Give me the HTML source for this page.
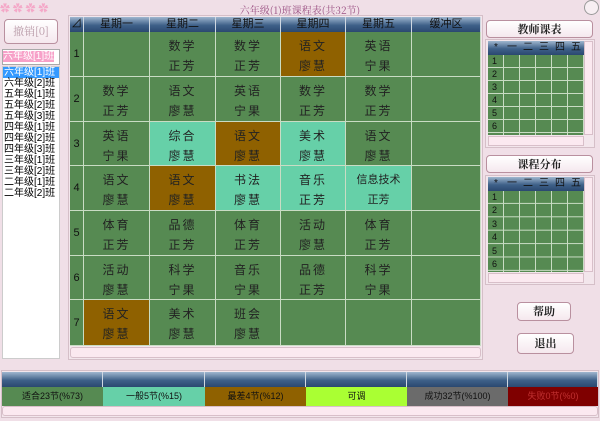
<!DOCTYPE html><html><head><meta charset="utf-8"><style>
*{margin:0;padding:0;box-sizing:border-box}
body{width:600px;height:421px;background:#f0dfe7;position:relative;overflow:hidden;font-family:"Liberation Sans","Noto Sans CJK SC","WenQuanYi Zen Hei",sans-serif}
.a{position:absolute}
.title{left:0;width:600px;top:2px;text-align:center;font-size:10px;color:#9a4f82;font-family:"Noto Serif CJK SC",serif}
.btn{background:linear-gradient(#fff,#f5e8ee);border:1px solid #b9909f;border-radius:4px;text-align:center;font-weight:bold;font-size:11px;color:#222;font-family:"Noto Serif CJK SC",serif}
.hd{background:linear-gradient(#9fb6cf,#3f6189 55%,#2a4870);color:#111;font-size:11px;line-height:15px;text-align:center;border-right:1px solid #cfd8e2}
.c{border-right:1px solid #c9dcc4;border-bottom:1px solid #c9dcc4;font-size:12px;color:#222;text-align:center;line-height:20px;padding-top:4px;letter-spacing:2px}
.g{background:#568a52}.t{background:#66d0a8}.b{background:#8f6100}
.n{background:#568a52;border-right:1px solid #c9dcc4;border-bottom:1px solid #c9dcc4;font-size:11px;color:#111;text-align:center}
.list div{height:11px;line-height:11px;font-size:10px;color:#000;padding-left:1px;white-space:nowrap}
.sb{background:#fbe9f0;border:1px solid #d8bfc9}
.lg{font-size:9px;text-align:center;line-height:19px;color:#111}
.lh{top:372px;height:15px;background:linear-gradient(#9fb6cf,#3f6189 55%,#2a4870);border-right:1px solid #d0d8e2}
.mh{display:flex;background:linear-gradient(#9fb6cf,#3f6189 55%,#2a4870);font-size:10px;color:#111;line-height:14px}
.mh span{width:16px;text-align:center}
</style></head><body>
<div class="a title">六年级(1)班课程表(共32节)</div>
<div class="a" style="left:584px;top:0;width:15px;height:15px;border:1px solid #999;border-radius:50%;background:#f7eef2"></div>
<div class="a" style="left:0;top:0;width:70px;height:16px;color:#f4a8c8;font-size:10px">✿ ✿ ✿ ✿</div>
<div class="a btn" style="left:4px;top:19px;width:54px;height:25px;line-height:23px;color:#b99aa8;font-weight:normal">撤销[0]</div>
<div class="a" style="left:2px;top:49px;width:58px;height:16px;background:#fff;border:1px solid #a9a9a9;font-size:10px;line-height:14px"><span style="background:#f7a0c8;color:#fff">六年级[1]班</span></div>
<div class="a list" style="left:2px;top:66px;width:58px;height:293px;background:#fff;border:1px solid #ccc">
<div style="background:#3399ff;color:#fff">六年级[1]班</div><div>六年级[2]班</div><div>五年级[1]班</div><div>五年级[2]班</div><div>五年级[3]班</div><div>四年级[1]班</div><div>四年级[2]班</div><div>四年级[3]班</div><div>三年级[1]班</div><div>三年级[2]班</div><div>二年级[1]班</div><div>二年级[2]班</div></div>
<div class="a" style="left:68px;top:15px;width:415px;height:345px;border:1px solid #d5bfc8;background:#f3e6ec"></div>
<div class="a hd" style="left:70px;top:17px;width:14px;height:15px">⊿</div>
<div class="a hd" style="left:84px;top:17px;width:66px;height:15px">星期一</div>
<div class="a hd" style="left:150px;top:17px;width:66px;height:15px">星期二</div>
<div class="a hd" style="left:216px;top:17px;width:65px;height:15px">星期三</div>
<div class="a hd" style="left:281px;top:17px;width:65px;height:15px">星期四</div>
<div class="a hd" style="left:346px;top:17px;width:66px;height:15px">星期五</div>
<div class="a hd" style="left:412px;top:17px;width:69px;height:15px">缓冲区</div>
<div class="a n" style="left:70px;top:32px;width:14px;height:45px;line-height:45px">1</div>
<div class="a n" style="left:70px;top:77px;width:14px;height:45px;line-height:45px">2</div>
<div class="a n" style="left:70px;top:122px;width:14px;height:44px;line-height:44px">3</div>
<div class="a n" style="left:70px;top:166px;width:14px;height:45px;line-height:45px">4</div>
<div class="a n" style="left:70px;top:211px;width:14px;height:45px;line-height:45px">5</div>
<div class="a n" style="left:70px;top:256px;width:14px;height:44px;line-height:44px">6</div>
<div class="a n" style="left:70px;top:300px;width:14px;height:46px;line-height:46px">7</div>
<div class="a c g" style="left:84px;top:32px;width:66px;height:45px"></div>
<div class="a c g" style="left:150px;top:32px;width:66px;height:45px">数学<br>正芳</div>
<div class="a c g" style="left:216px;top:32px;width:65px;height:45px">数学<br>正芳</div>
<div class="a c b" style="left:281px;top:32px;width:65px;height:45px">语文<br>廖慧</div>
<div class="a c g" style="left:346px;top:32px;width:66px;height:45px">英语<br>宁果</div>
<div class="a c g" style="left:412px;top:32px;width:69px;height:45px"></div>
<div class="a c g" style="left:84px;top:77px;width:66px;height:45px">数学<br>正芳</div>
<div class="a c g" style="left:150px;top:77px;width:66px;height:45px">语文<br>廖慧</div>
<div class="a c g" style="left:216px;top:77px;width:65px;height:45px">英语<br>宁果</div>
<div class="a c g" style="left:281px;top:77px;width:65px;height:45px">数学<br>正芳</div>
<div class="a c g" style="left:346px;top:77px;width:66px;height:45px">数学<br>正芳</div>
<div class="a c g" style="left:412px;top:77px;width:69px;height:45px"></div>
<div class="a c g" style="left:84px;top:122px;width:66px;height:44px">英语<br>宁果</div>
<div class="a c t" style="left:150px;top:122px;width:66px;height:44px">综合<br>廖慧</div>
<div class="a c b" style="left:216px;top:122px;width:65px;height:44px">语文<br>廖慧</div>
<div class="a c t" style="left:281px;top:122px;width:65px;height:44px">美术<br>廖慧</div>
<div class="a c g" style="left:346px;top:122px;width:66px;height:44px">语文<br>廖慧</div>
<div class="a c g" style="left:412px;top:122px;width:69px;height:44px"></div>
<div class="a c g" style="left:84px;top:166px;width:66px;height:45px">语文<br>廖慧</div>
<div class="a c b" style="left:150px;top:166px;width:66px;height:45px">语文<br>廖慧</div>
<div class="a c t" style="left:216px;top:166px;width:65px;height:45px">书法<br>廖慧</div>
<div class="a c t" style="left:281px;top:166px;width:65px;height:45px">音乐<br>正芳</div>
<div class="a c t" style="left:346px;top:166px;width:66px;height:45px;letter-spacing:0;font-size:11px">信息技术<br>正芳</div>
<div class="a c g" style="left:412px;top:166px;width:69px;height:45px"></div>
<div class="a c g" style="left:84px;top:211px;width:66px;height:45px">体育<br>正芳</div>
<div class="a c g" style="left:150px;top:211px;width:66px;height:45px">品德<br>正芳</div>
<div class="a c g" style="left:216px;top:211px;width:65px;height:45px">体育<br>正芳</div>
<div class="a c g" style="left:281px;top:211px;width:65px;height:45px">活动<br>廖慧</div>
<div class="a c g" style="left:346px;top:211px;width:66px;height:45px">体育<br>正芳</div>
<div class="a c g" style="left:412px;top:211px;width:69px;height:45px"></div>
<div class="a c g" style="left:84px;top:256px;width:66px;height:44px">活动<br>廖慧</div>
<div class="a c g" style="left:150px;top:256px;width:66px;height:44px">科学<br>宁果</div>
<div class="a c g" style="left:216px;top:256px;width:65px;height:44px">音乐<br>宁果</div>
<div class="a c g" style="left:281px;top:256px;width:65px;height:44px">品德<br>正芳</div>
<div class="a c g" style="left:346px;top:256px;width:66px;height:44px">科学<br>宁果</div>
<div class="a c g" style="left:412px;top:256px;width:69px;height:44px"></div>
<div class="a c b" style="left:84px;top:300px;width:66px;height:46px">语文<br>廖慧</div>
<div class="a c g" style="left:150px;top:300px;width:66px;height:46px">美术<br>廖慧</div>
<div class="a c g" style="left:216px;top:300px;width:65px;height:46px">班会<br>廖慧</div>
<div class="a c g" style="left:281px;top:300px;width:65px;height:46px"></div>
<div class="a c g" style="left:346px;top:300px;width:66px;height:46px"></div>
<div class="a c g" style="left:412px;top:300px;width:69px;height:46px"></div>
<div class="a sb" style="left:70px;top:347px;width:411px;height:11px;border-radius:3px"></div>
<div class="a btn" style="left:486px;top:20px;width:107px;height:18px;line-height:16px">教师课表</div>
<div class="a" style="left:485px;top:39px;width:110px;height:109px;border:1px solid #d5bfc8;background:#f3e6ec"></div>
<div class="a mh" style="left:488px;top:41px;width:96px;height:14px"><span>*</span><span>一</span><span>二</span><span>三</span><span>四</span><span>五</span></div>
<div class="a" style="left:488px;top:55px;width:96px;height:80px;background:#568a52;background-image:linear-gradient(90deg,transparent 15px,#c9dcc4 15px,#c9dcc4 16px,transparent 16px),linear-gradient(transparent 12px,#c9dcc4 12px,#c9dcc4 13px,transparent 13px);background-size:16px 13px;font-size:9px;line-height:13px;color:#111;padding-left:4px">1<br>2<br>3<br>4<br>5<br>6</div>
<div class="a sb" style="left:584px;top:41px;width:9px;height:94px"></div>
<div class="a sb" style="left:488px;top:136px;width:96px;height:10px"></div>
<div class="a btn" style="left:486px;top:155px;width:107px;height:18px;line-height:16px">课程分布</div>
<div class="a" style="left:485px;top:175px;width:110px;height:110px;border:1px solid #d5bfc8;background:#f3e6ec"></div>
<div class="a mh" style="left:488px;top:177px;width:96px;height:14px"><span>*</span><span>一</span><span>二</span><span>三</span><span>四</span><span>五</span></div>
<div class="a" style="left:488px;top:191px;width:96px;height:81px;background:#568a52;background-image:linear-gradient(90deg,transparent 15px,#c9dcc4 15px,#c9dcc4 16px,transparent 16px),linear-gradient(transparent 12px,#c9dcc4 12px,#c9dcc4 13px,transparent 13px);background-size:16px 13.4px;font-size:9px;line-height:13.4px;color:#111;padding-left:4px">1<br>2<br>3<br>4<br>5<br>6</div>
<div class="a sb" style="left:584px;top:177px;width:9px;height:95px"></div>
<div class="a sb" style="left:488px;top:273px;width:96px;height:10px"></div>
<div class="a btn" style="left:517px;top:302px;width:54px;height:19px;line-height:17px">帮助</div>
<div class="a btn" style="left:517px;top:333px;width:57px;height:21px;line-height:19px">退出</div>
<div class="a" style="left:1px;top:370px;width:598px;height:48px;border:1px solid #d5bfc8;background:#f3e6ec"></div>
<div class="a lh" style="left:2px;width:101px"></div>
<div class="a lh" style="left:103px;width:102px"></div>
<div class="a lh" style="left:205px;width:101px"></div>
<div class="a lh" style="left:306px;width:101px"></div>
<div class="a lh" style="left:407px;width:101px"></div>
<div class="a lh" style="left:508px;width:90px"></div>
<div class="a lg" style="left:2px;top:387px;width:101px;height:19px;background:#568a52">适合23节(%73)</div>
<div class="a lg" style="left:103px;top:387px;width:102px;height:19px;background:#66d0a8">一般5节(%15)</div>
<div class="a lg" style="left:205px;top:387px;width:101px;height:19px;background:#8f6100">最差4节(%12)</div>
<div class="a lg" style="left:306px;top:387px;width:101px;height:19px;background:#aaff33">可调</div>
<div class="a lg" style="left:407px;top:387px;width:101px;height:19px;background:#6b6b6b">成功32节(%100)</div>
<div class="a lg" style="left:508px;top:387px;width:90px;height:19px;background:#7f0000;color:#c03030">失败0节(%0)</div>
<div class="a sb" style="left:2px;top:406px;width:596px;height:10px;border-radius:3px"></div>
</body></html>
